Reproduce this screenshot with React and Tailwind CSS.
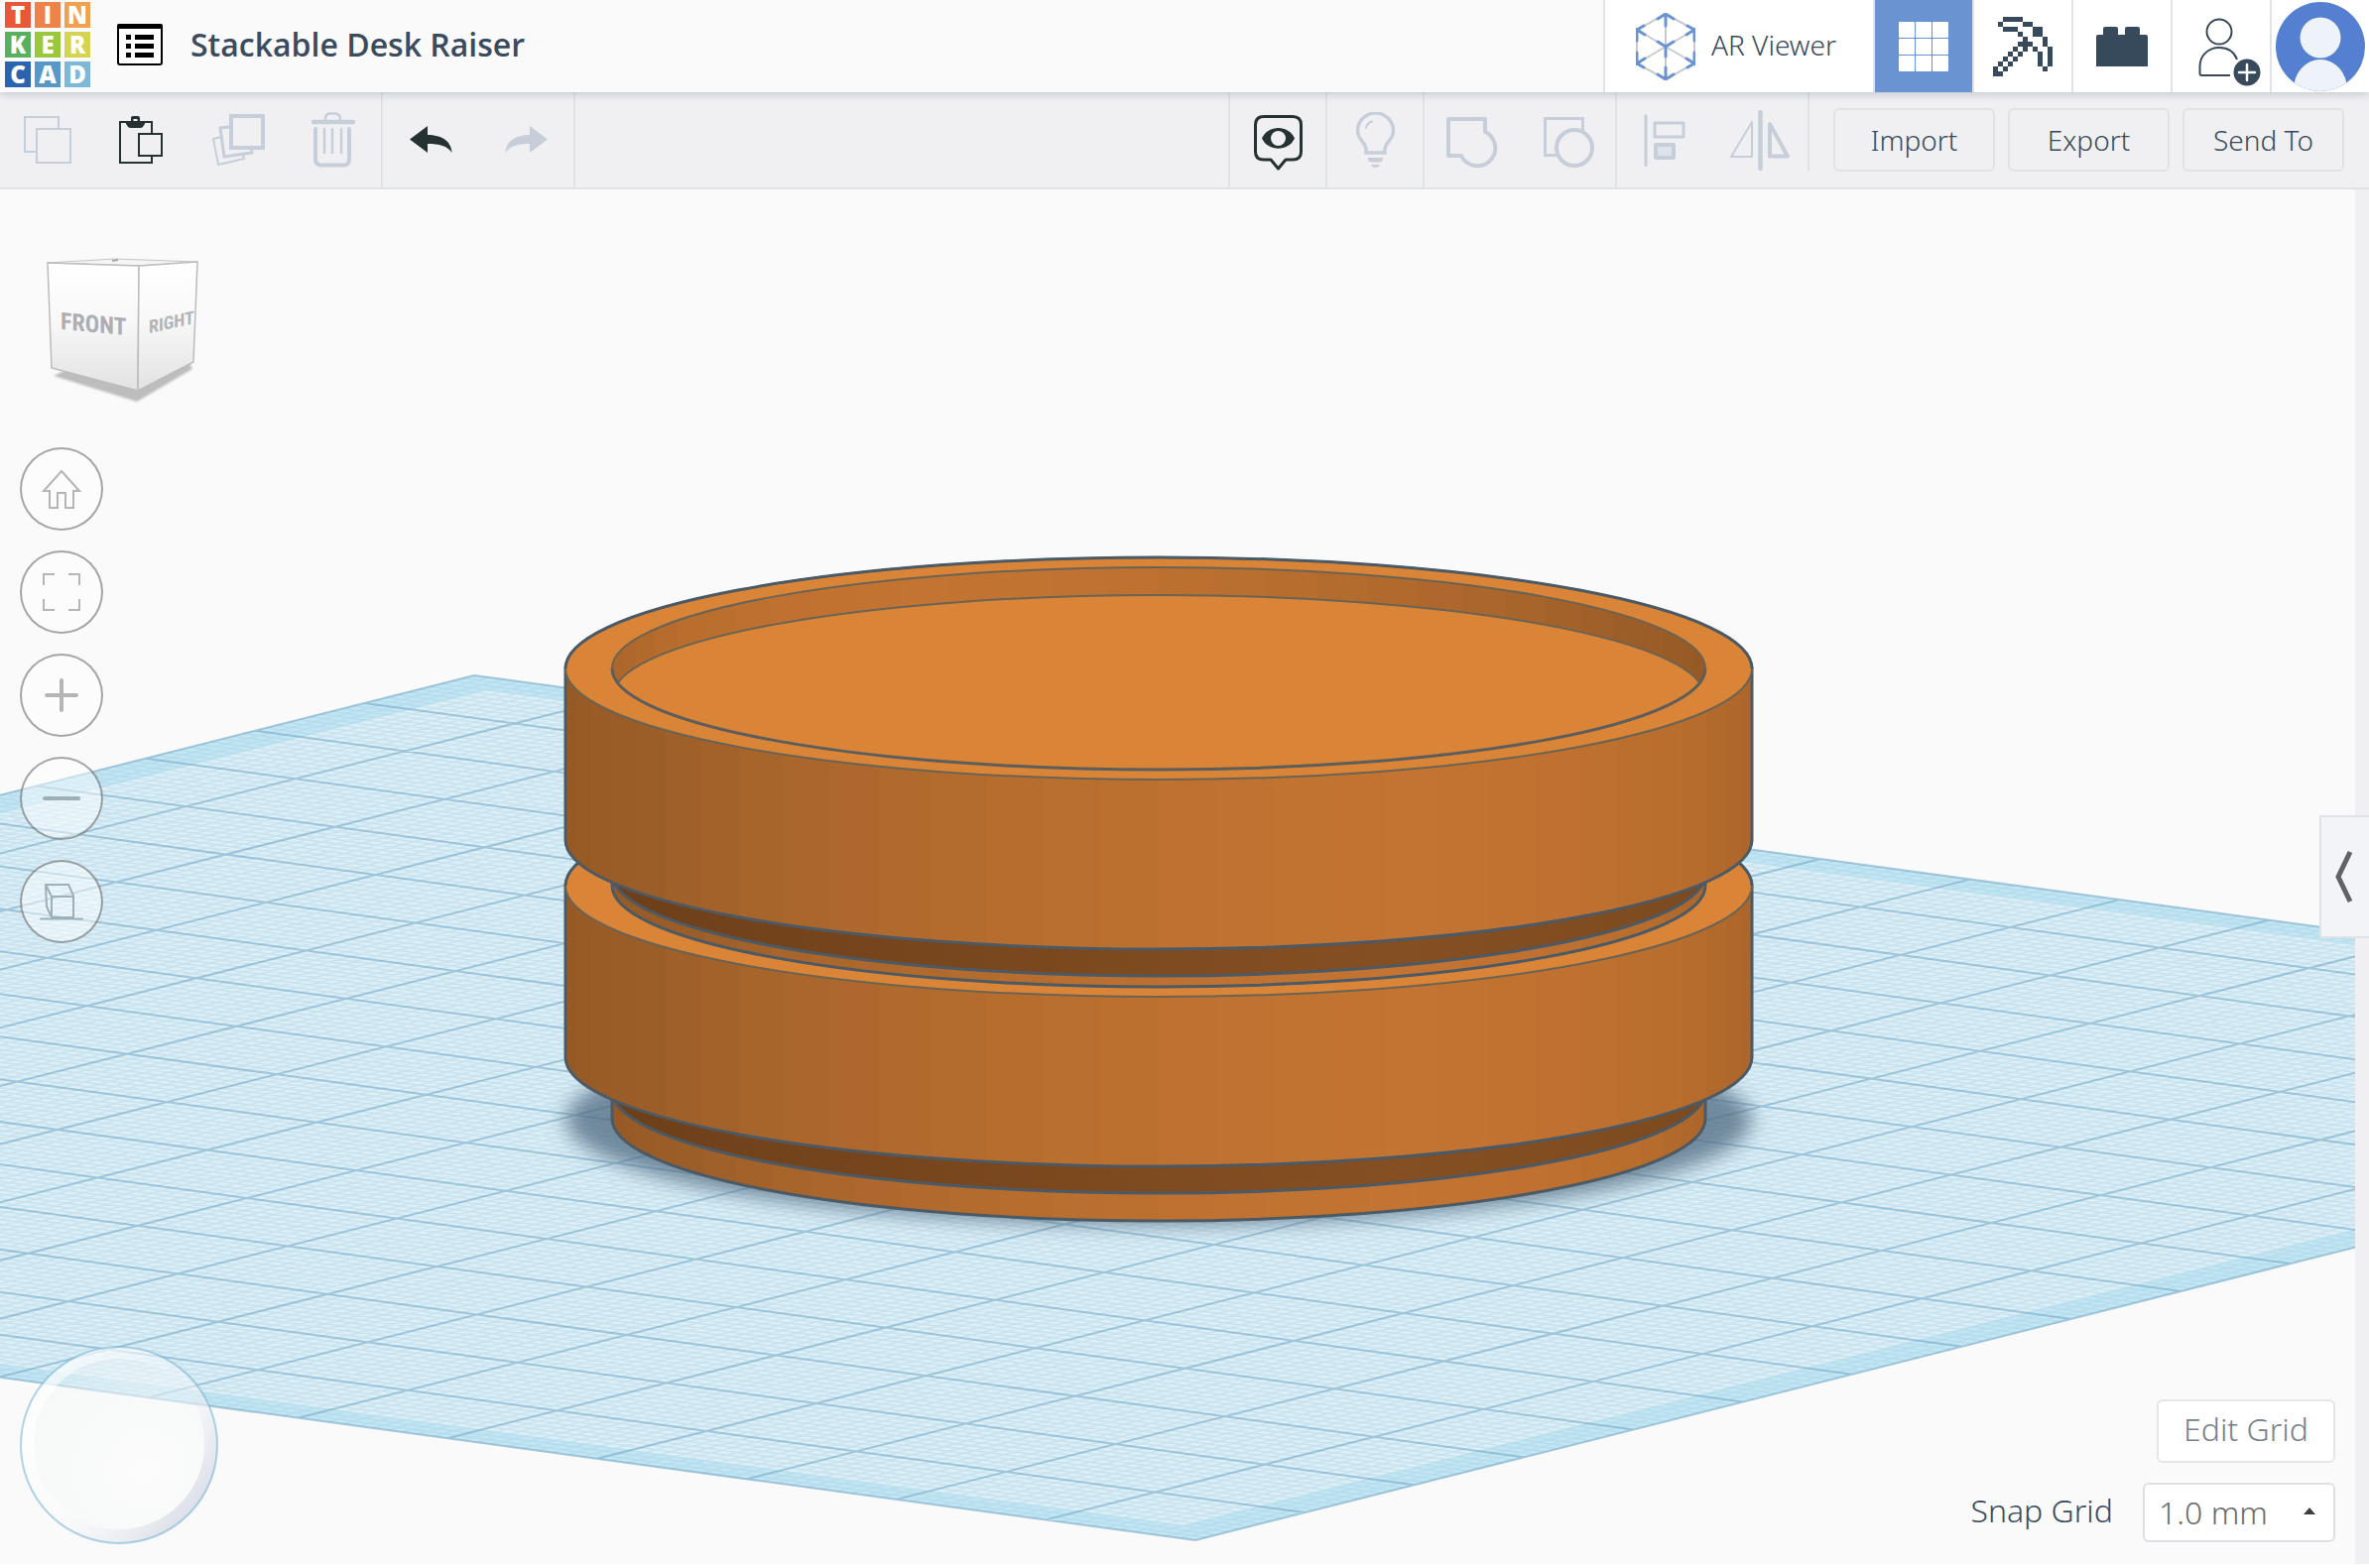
import { useState } from 'react';

const LOGO_TILES = [
    { letter: 'T', color: 'bg-[#e8573a]' },
    { letter: 'I', color: 'bg-[#ee824b]' },
    { letter: 'N', color: 'bg-[#efa050]' },
    { letter: 'K', color: 'bg-[#56b05f]' },
    { letter: 'E', color: 'bg-[#9bc83a]' },
    { letter: 'R', color: 'bg-[#d5d352]' },
    { letter: 'C', color: 'bg-[#2a64b0]' },
    { letter: 'A', color: 'bg-[#5798c9]' },
    { letter: 'D', color: 'bg-[#7eb7d8]' },
];

// 12x12 pixel map of the pickaxe
const PICKAXE = [
    [2, 3, 4, 5],
    [1, 6, 7],
    [2, 3, 4, 8, 9],
    [5, 8, 9],
    [6, 10],
    [5, 6, 7, 10],
    [4, 6, 8, 11],
    [3, 5, 9, 11],
    [2, 4, 9, 11],
    [1, 3, 9, 11],
    [0, 2, 10],
    [0, 1],
];

/* ---------- header icons ---------- */

const ListIcon = () => (
    <svg width="46" height="42" viewBox="0 0 46 42">
        <rect x="1" y="1" width="44" height="40" rx="2" fill="#fff" stroke="#000" strokeWidth="2" />
        <path d="M0 5V2a2 2 0 0 1 2-2h42a2 2 0 0 1 2 2v3z" fill="#000" />
        <path d="M9 11h5v5H9zM9 20h5v5H9zM9 29h5v5H9zM18 11h19v5H18zM18 20h19v5H18zM18 29h19v5H18z" fill="#000" />
    </svg>
);

const ArIcon = () => (
    <svg width="60" height="68" viewBox="-1 -1 60 68" fill="none" strokeLinecap="round">
        <path
            d="M29 0L58 16V50L29 66L0 50V16ZM29 0V66M0 16L58 50M58 16L0 50"
            stroke="#c9cacd"
            strokeWidth="2"
        />
        <path
            d="M21 5L29 0L37 5M29 0V12M0 27V16L8 21M0 16L7 12M58 27V16L50 21M58 16L51 12M0 39V50L8 45M0 50L7 54M58 39V50L50 45M58 50L51 54M21 61L29 66L37 61M29 66V54M21 28L29 33L37 28M29 33V43"
            stroke="#6a93d2"
            strokeWidth="3"
        />
    </svg>
);

const GridIcon = () => (
    <svg width="50" height="50" viewBox="0 0 50 50" fill="#fff">
        {[0, 17, 34].map(y => [0, 17, 34].map(x => (
            <rect key={`${x}-${y}`} x={x} y={y} width="16" height="16" rx="1" />
        )))}
    </svg>
);

const PickaxeIcon = () => (
    <svg width="60" height="60" viewBox="0 0 12 12" fill="#374a5c" shapeRendering="crispEdges">
        {PICKAXE.map((cols, row) => cols.map(col => (
            <rect key={`${row}-${col}`} x={col} y={row} width="1" height="1" />
        )))}
    </svg>
);

const BrickIcon = () => (
    <svg width="52" height="40" viewBox="0 0 52 40" fill="#374a5c">
        <path d="M0 40V10a2 2 0 0 1 2-2H7V2a2 2 0 0 1 2-2H20a2 2 0 0 1 2 2V8H29V2a2 2 0 0 1 2-2H42a2 2 0 0 1 2 2V8H50a2 2 0 0 1 2 2V40z" />
    </svg>
);

const InviteIcon = () => (
    <svg width="82" height="82" viewBox="-18 -12 82 82" fill="none">
        <circle cx="21" cy="14" r="12.500" stroke="#374a5c" strokeWidth="2" />
        <path d="M32 58H3.500Q1.500 58 1.500 56V49C1.500 38 10 30 21 30C29 30 36 34 39 42" stroke="#374a5c" strokeWidth="2" />
        <circle cx="49" cy="55" r="13.500" fill="#374a5c" />
        <path d="M49 47V63M41 55H57" stroke="#fff" strokeWidth="2.500" strokeLinecap="round" />
    </svg>
);

const AvatarIcon = () => (
    <svg width="90" height="90" viewBox="0 0 90 90">
        <defs>
            <clipPath id="avatarClip"><circle cx="45" cy="45" r="45" /></clipPath>
        </defs>
        <g clipPath="url(#avatarClip)">
            <rect width="90" height="90" fill="#5580d2" />
            <circle cx="45" cy="36" r="20.5" fill="#eef2f9" />
            <ellipse cx="45" cy="88" rx="27" ry="30" fill="#eef2f9" />
        </g>
    </svg>
);

/* ---------- toolbar icons ---------- */

const CopyIcon = () => (
    <svg width="48" height="48" viewBox="0 0 48 48" fill="#f0f0f3" stroke="#c6cfd9" strokeWidth="2">
        <rect x="1" y="1" width="34" height="35" />
        <rect x="13" y="13" width="34" height="34" />
    </svg>
);

const PasteIcon = () => (
    <svg width="48" height="48" viewBox="0 0 48 48" fill="none" stroke="#263132">
        <rect x="1" y="6" width="32" height="41" strokeWidth="2" />
        <path d="M7 5H12V2Q12 0 14 0H19Q21 0 21 2V5H26V8Q25 9 24 11Q23 12 21 12H12Q10 12 9 11Q8 9 7 8zM14.500 3V7H18.500V3z" fill="#263132" fillRule="evenodd" stroke="none" />
        <rect x="20" y="18" width="23" height="22" fill="#f0f0f3" strokeWidth="2" />
    </svg>
);

const DuplicateIcon = () => (
    <svg width="53" height="52" viewBox="0 0 53 52" fill="#f0f0f3" stroke="#c6cfd9">
        <path d="M1 25L26 19L32 45L6 51Z" strokeWidth="2" />
        <path d="M8 14L36 11L40 39L12 43Z" strokeWidth="3" />
        <rect x="19" y="2" width="32" height="32" strokeWidth="4" />
    </svg>
);

const TrashIcon = () => (
    <svg width="44" height="56" viewBox="0 0 44 56" fill="none" stroke="#c6cfd9" strokeLinecap="round">
        <path d="M14 8V7Q14 2 18 1.500H24Q29 2 29 7V8" strokeWidth="2.500" />
        <path d="M2 10H42" strokeWidth="4.500" />
        <path d="M4 17V47Q4 53.500 10 53.500H33Q38 53.500 38 47V17" strokeWidth="4" />
        <path d="M13 17V41M21 17V41M30 17V41" strokeWidth="2.500" />
    </svg>
);

const UndoIcon = () => (
    <svg width="43" height="28" viewBox="0 0 43 28" fill="#263132">
        <path d="M0 13.500L18 0V9C32 9 42 15 42.500 27C38 20 30 18 18 18V27Z" />
    </svg>
);

const RedoIcon = () => (
    <svg width="43" height="28" viewBox="0 0 43 28" fill="#c6cfd9">
        <path d="M43 13.500L25 0V9C11 9 1 15 0.500 27C5 20 13 18 25 18V27Z" />
    </svg>
);

const ViewIcon = () => (
    <svg width="49" height="62" viewBox="0 -6 49 62" fill="none">
        <path d="M10 1.500H39Q47.500 1.500 47.500 10V37Q47.500 45 39 45H32L24.500 54L17 45H10Q1.500 45 1.500 37V10Q1.500 1.500 10 1.500Z" stroke="#263132" strokeWidth="3" strokeLinejoin="round" />
        <path d="M8 23.500C14 9.500 35 9.500 41 23.500C35 37 14 37 8 23.500Z" fill="#263132" />
        <circle cx="24.500" cy="23.500" r="7.500" fill="#f0f0f3" />
    </svg>
);

const BulbIcon = () => (
    <svg width="39" height="56" viewBox="0 0 39 56" fill="none" stroke="#c6cfd9">
        <path d="M10 41V37Q10 35 8 32C5 28 1.500 25 1.500 19A18 18 0 0 1 37.500 19C37.500 25 34 28 31 32Q29 35 29 37V41Z" strokeWidth="3.500" />
        <path d="M10 16Q11 11 16 9.500" strokeWidth="2" strokeLinecap="round" />
        <path d="M12 46H27V48Q26 50.500 23 50.500H16Q13 50.500 12 48ZM15 53H24Q23 56 19.500 56Q16 56 15 53Z" fill="#c6cfd9" stroke="none" />
    </svg>
);

const GroupIcon = () => (
    <svg width="52" height="58" viewBox="0 -6 52 58" fill="none" stroke="#c6cfd9" strokeWidth="4">
        <path d="M2 2H39V15A18 18 0 1 1 15 39H2Z" strokeLinejoin="round" />
    </svg>
);

const UngroupIcon = () => (
    <svg width="56" height="58" viewBox="-4 -6 56 58" fill="#f0f0f3" stroke="#c6cfd9">
        <rect x="1.500" y="1.500" width="38" height="37" strokeWidth="3" />
        <circle cx="31" cy="31" r="18" strokeWidth="4" />
    </svg>
);

const AlignIcon = () => (
    <svg width="42" height="53" viewBox="0 0 42 53" fill="none" stroke="#c6cfd9" strokeLinejoin="round">
        <path d="M2 1.500V51.500" strokeWidth="3" strokeLinecap="round" />
        <rect x="11" y="9" width="29" height="14" strokeWidth="3" />
        <rect x="12" y="31" width="18" height="13" fill="#dfe3e9" strokeWidth="4" />
    </svg>
);

const MirrorIcon = () => (
    <svg width="61" height="61" viewBox="0 0 61 61" fill="none" stroke="#c6cfd9" strokeLinejoin="round">
        <path d="M30.500 2V59" strokeWidth="4.500" strokeLinecap="round" />
        <path d="M22 12V47H1Z" strokeWidth="2" />
        <path d="M40 14V46.500H58Z" strokeWidth="4" />
    </svg>
);

/* ---------- view controls ---------- */

const HomeIcon = () => (
    <svg width="42" height="40" viewBox="0 0 42 40" fill="none" stroke="#b5b5b5" strokeWidth="2">
        <path d="M21 2L39 22H33V39H25V24H17V39H9V22H3Z" />
    </svg>
);

const FitIcon = () => (
    <svg width="38" height="38" viewBox="0 0 38 38" fill="none" stroke="#b5b5b5" strokeWidth="2">
        <path d="M1 12V1H12M26 1H37V12M37 26V37H26M12 37H1V26" />
    </svg>
);

const PlusIcon = () => (
    <svg width="34" height="34" viewBox="0 0 34 34" stroke="#b5b5b5" strokeWidth="4" strokeLinecap="round">
        <path d="M17 2V32M2 17H32" />
    </svg>
);

const MinusIcon = () => (
    <svg width="38" height="6" viewBox="0 0 38 6" stroke="#9db0b8" strokeWidth="4" strokeLinecap="round">
        <path d="M2 3H36" />
    </svg>
);

const PerspectiveIcon = () => (
    <svg width="44" height="38" viewBox="0 0 44 38" fill="none" stroke="#9db0b8" strokeWidth="2" strokeLinejoin="round">
        <path d="M6 2H29L34 13V35H12L7 24ZM6 2L12 14H34M12 14V35" />
        <path d="M1 36.500H43" strokeLinecap="round" />
    </svg>
);

const ViewCube = () => (
    <svg width="160" height="150" viewBox="0 0 160 150">
        <defs>
            <linearGradient id="cubeFront" x1="0" y1="0" x2="0" y2="1">
                <stop offset="0" stopColor="#fff" />
                <stop offset="0.45" stopColor="#f8f8f8" />
                <stop offset="1" stopColor="#e2e2e2" />
            </linearGradient>
            <filter id="cubeShadow"><feGaussianBlur stdDeviation="1" /></filter>
        </defs>
        <path d="M14 123L98 149L154 116L150 108L97 128L30 115Z" fill="#bdbdbd" filter="url(#cubeShadow)" />
        <path d="M8 9L76 5L159 8L100 12Z" fill="#f5f5f5" stroke="#c4c4c4" />
        <path d="M8 9L100 12L99 138L12 115Z" fill="url(#cubeFront)" stroke="#bcbcbc" strokeWidth="1.500" />
        <path d="M100 12L159 8L155 109L99 138Z" fill="url(#cubeFront)" stroke="#bcbcbc" strokeWidth="1.500" />
        <path d="M73 7L79 6" stroke="#a8a8a8" strokeWidth="2" />
        <text transform="translate(21 76) skewY(5)" fontSize="24" fontWeight="700" fill="#acaeb2" className="font-['Liberation_Sans_Narrow','Roboto_Condensed','Open_Sans_Condensed','Open_Sans',sans-serif]">
            FRONT
        </text>
        <text transform="translate(110 80) skewY(-12)" fontSize="18" fontWeight="700" fill="#b2b4b8" className="font-['Liberation_Sans_Narrow','Roboto_Condensed','Open_Sans_Condensed','Open_Sans',sans-serif]">
            RIGHT
        </text>
    </svg>
);

const Joystick = () => (
    <svg width="200" height="200" viewBox="0 0 200 200">
        <defs>
            <linearGradient id="joyRing" x1="0.1" y1="0.2" x2="0.85" y2="0.85">
                <stop offset="0" stopColor="#fff" stopOpacity="0.75" />
                <stop offset="0.5" stopColor="#fcfcfd" stopOpacity="0.4" />
                <stop offset="1" stopColor="#dcdfe9" stopOpacity="0.95" />
            </linearGradient>
            <radialGradient id="joyPad" cx="0.65" cy="0.65" r="0.75">
                <stop offset="0" stopColor="#fdfdfd" stopOpacity="0.7" />
                <stop offset="1" stopColor="#f3f6f7" stopOpacity="0.4" />
            </radialGradient>
        </defs>
        <path d="M100 1a99 99 0 1 0 0.010 0zM100 13a86 86 0 1 1 -0.010 0z" fill="url(#joyRing)" fillRule="evenodd" />
        <circle cx="100" cy="99" r="86" fill="url(#joyPad)" />
        <circle cx="100" cy="100" r="99" fill="none" stroke="#6fb0d2" strokeOpacity="0.55" strokeWidth="2" />
    </svg>
);

/* ---------- 3D scene ---------- */

const LINE = '#4c5a66';
const EDGE = '#6b6353';
const CX = 1168;
const RX = 598;
const RX_IN = 551;

// wall colours from the left edge of a cylinder to the right one
const WALL = [
    [0, 150, 90, 38],
    [0.08, 157, 95, 40],
    [0.2, 171, 102, 44],
    [0.36, 182, 109, 46],
    [0.52, 190, 113, 48],
    [0.7, 195, 116, 50],
    [0.82, 193, 114, 49],
    [0.94, 184, 110, 46],
    [1, 172, 101, 43],
];

const wallColor = (p) => {
    const i = Math.max(1, WALL.findIndex(s => s[0] >= p));
    const [p0, ...a] = WALL[i - 1];
    const [p1, ...b] = WALL[i];
    const t = (p - p0) / (p1 - p0);
    return `rgb(${a.map((v, k) => Math.round(v + (b[k] - v) * t)).join(',')})`;
};

const FACETS = Array.from({ length: 32 }, (_, i) => {
    const edge = (k) => (1 - Math.cos((k * Math.PI) / 32)) / 2;
    return { from: edge(i), to: edge(i + 1), color: wallColor((edge(i) + edge(i + 1)) / 2) };
});

const WallGradient = ({ id, rx, flip }) => (
    <linearGradient id={id} gradientUnits="userSpaceOnUse" x1={flip ? CX + rx : CX - rx} x2={flip ? CX - rx : CX + rx} y1="0" y2="0">
        {FACETS.map(f => [
            <stop key={`a${f.from}`} offset={f.from} stopColor={f.color} />,
            <stop key={`b${f.from}`} offset={f.to} stopColor={f.color} />,
        ])}
    </linearGradient>
);

// A is the back corner of the plane; U and V run along its two edges
const A = [478, 681];
const U = [2714, 370];
const V = [-1987, 502];
const CELLS = 18;

const at = (u, v) => `${(A[0] + U[0] * u + V[0] * v).toFixed(1)} ${(A[1] + U[1] * u + V[1] * v).toFixed(1)}`;
const quad = (m) => `M${at(m, m)}L${at(1 - m, m)}L${at(1 - m, 1 - m)}L${at(m, 1 - m)}Z`;
const gridPath = (n, skip) => {
    let d = '';
    for (let i = 0; i <= n; i++) {
        if (skip && i % skip === 0) continue;
        d += `M${at(i / n, 0)}L${at(i / n, 1)}M${at(0, i / n)}L${at(1, i / n)}`;
    }
    return d;
};

const Workplane = () => (
    <g fill="none">
        <path d={quad(0)} fill="#c2e6f3" />
        <path d={quad(0.017)} fill="#dceff7" />
        <path d={gridPath(CELLS * 10, 10)} stroke="#a0cce0" strokeOpacity="0.34" strokeWidth="1.5" />
        <path d={gridPath(CELLS)} stroke="#74a9c7" strokeOpacity="0.6" strokeWidth="2" />
    </g>
);

const Wall = ({ rx, top, bottom, ry, fill }) => (
    <path
        d={`M${CX - rx} ${top}V${bottom}A${rx} ${ry} 0 0 0 ${CX + rx} ${bottom}V${top}Z`}
        fill={fill}
        stroke={LINE}
        strokeWidth="3"
    />
);

// shaded step between the wide body and the neck under it
const Step = ({ y }) => (
    <path
        d={`M${CX - RX + 14} ${y - 9}L${CX - RX_IN} ${y + 14}A${RX_IN} 103 0 0 0 ${CX + RX_IN} ${y + 14}L${CX + RX - 14} ${y - 9}Z`}
        fill="url(#step)"
        stroke={LINE}
        strokeWidth="3"
    />
);

const Body = ({ dy }) => (
    <g transform={`translate(0 ${dy})`}>
        <Step y={867} />
        <Wall rx={RX} top={674} bottom={847} ry={110} fill="url(#wall)" />
        <ellipse cx={CX} cy="674" rx={RX} ry="112" fill="#d98437" stroke={EDGE} strokeWidth="2" />
        <path d={`M${CX - RX} 674A${RX} 112 0 0 1 ${CX + RX} 674`} fill="none" stroke={LINE} strokeWidth="3" />
        <ellipse cx={CX} cy="674" rx={RX_IN} ry="102" fill="url(#innerWall)" stroke={EDGE} strokeWidth="2" />
    </g>
);

const Scene = () => (
    <svg className="col-start-1 row-start-1 h-full w-full" viewBox="0 191 2374 1386" preserveAspectRatio="xMidYMid slice" role="img" aria-label="Workplane">
        <defs>
            <WallGradient id="wall" rx={RX} />
            <WallGradient id="neckWall" rx={RX_IN} />
            <WallGradient id="innerWall" rx={RX_IN} flip />
            <linearGradient id="step" x1="0" x2="1" y1="0" y2="0">
                <stop offset="0" stopColor="#6c3f1a" />
                <stop offset="0.3" stopColor="#78461d" />
                <stop offset="0.7" stopColor="#854f22" />
                <stop offset="1" stopColor="#7c4a1f" />
            </linearGradient>
            <filter id="shadow" x="-10%" y="-30%" width="120%" height="160%">
                <feGaussianBlur stdDeviation="10" />
            </filter>
            <clipPath id="bowl"><ellipse cx={CX} cy="674" rx={RX_IN} ry="102" /></clipPath>
        </defs>
        <rect y="191" width="2374" height="1386" fill="#fafafa" />
        <Workplane />
        <ellipse cx={CX} cy="1129" rx="598" ry="106" fill="#4f6880" fillOpacity="0.75" filter="url(#shadow)" />
        <Wall rx={RX_IN} top={1100} bottom={1128} ry={103} fill="url(#neckWall)" />
        <Body dy={219} />
        {/* the lower rim keeps only the near side of its inner wall visible */}
        <ellipse cx={CX} cy="893" rx={RX_IN} ry="102" fill="url(#neckWall)" stroke={LINE} strokeWidth="3" />
        <Body dy={0} />
        <g clipPath="url(#bowl)">
            <ellipse cx={CX} cy="702" rx="550" ry="102" fill="#d98437" stroke={EDGE} strokeWidth="2" />
        </g>
        <path d={`M${CX - RX_IN} 674A${RX_IN} 102 0 0 0 ${CX + RX_IN} 674`} fill="none" stroke="#5d5e5c" strokeWidth="3" />
    </svg>
);

/* ---------- page ---------- */

const HeaderButton = ({ label, active, children }) => (
    <button
        type="button"
        aria-label={label}
        className={`flex w-[100px] items-center justify-center border-l-2 border-[#dfe2e7] ${active ? 'bg-[#6a93d2]' : 'bg-white'}`}
    >
        {children}
    </button>
);

const ToolButton = ({ label, disabled, children }) => (
    <button type="button" aria-label={label} disabled={disabled} className="flex w-24 items-center justify-center">
        {children}
    </button>
);

const ActionButton = ({ children }) => (
    <button type="button" className="h-16 w-[163px] rounded-md border-2 border-[#dfe2e7] text-[28px] font-light text-[#374a5c]">
        {children}
    </button>
);

const RoundButton = ({ label, children }) => (
    <button
        type="button"
        aria-label={label}
        className="flex size-[84px] items-center justify-center rounded-full border-2 border-black/35 bg-white/45"
    >
        {children}
    </button>
);

const Header = () => (
    <header className="relative z-10 flex h-[93px] justify-between bg-[#fafafa] shadow-[0_2px_8px_rgba(55,74,92,0.25)]">
        <div className="flex items-center pb-1">
            <a href="#" aria-label="Tinkercad" className="ml-[5px] grid grid-cols-3 gap-1 font-['Open_Sans',sans-serif] text-[24px] leading-[26px] font-extrabold text-white">
                {LOGO_TILES.map(tile => (
                    <span key={tile.letter} className={`size-[26px] text-center ${tile.color}`}>{tile.letter}</span>
                ))}
            </a>
            <button type="button" aria-label="Designs" className="ml-[27px]">
                <ListIcon />
            </button>
            <h1 className="ml-7 font-['Open_Sans',sans-serif] text-[32px] font-semibold text-[#3b4b5e]">Stackable Desk Raiser</h1>
        </div>
        <nav className="flex">
            <a href="#" className="flex w-[272px] items-center gap-4 border-l-2 border-[#dfe2e7] bg-white pl-[31px] text-[28px] font-light text-[#374a5c]">
                <ArIcon />
                <span className="pb-1">AR Viewer</span>
            </a>
            <HeaderButton label="3D design" active><GridIcon /></HeaderButton>
            <HeaderButton label="Blocks"><PickaxeIcon /></HeaderButton>
            <HeaderButton label="Bricks"><BrickIcon /></HeaderButton>
            <HeaderButton label="Invite people"><InviteIcon /></HeaderButton>
            <HeaderButton label="Account"><AvatarIcon /></HeaderButton>
        </nav>
    </header>
);

const Toolbar = () => (
    <div className="flex h-[98px] justify-between border-b-2 border-[#dfe2e7] bg-[#f0f0f3]">
        <div className="flex">
            <div className="flex border-r-2 border-[#dfe2e7]">
                <ToolButton label="Copy" disabled><CopyIcon /></ToolButton>
                <ToolButton label="Paste"><PasteIcon /></ToolButton>
                <ToolButton label="Duplicate" disabled><DuplicateIcon /></ToolButton>
                <ToolButton label="Delete" disabled><TrashIcon /></ToolButton>
            </div>
            <div className="flex border-r-2 border-[#dfe2e7]">
                <ToolButton label="Undo"><UndoIcon /></ToolButton>
                <ToolButton label="Redo" disabled><RedoIcon /></ToolButton>
            </div>
        </div>
        <div className="flex">
            <div className="flex border-l-2 border-[#dfe2e7]">
                <ToolButton label="View options"><ViewIcon /></ToolButton>
            </div>
            <div className="flex border-l-2 border-[#dfe2e7]">
                <ToolButton label="Show all" disabled><BulbIcon /></ToolButton>
            </div>
            <div className="flex border-l-2 border-[#dfe2e7]">
                <ToolButton label="Group" disabled><GroupIcon /></ToolButton>
                <ToolButton label="Ungroup" disabled><UngroupIcon /></ToolButton>
            </div>
            <div className="flex border-l-2 border-[#dfe2e7]">
                <ToolButton label="Align" disabled><AlignIcon /></ToolButton>
                <ToolButton label="Mirror" disabled><MirrorIcon /></ToolButton>
            </div>
            <div className="mr-6 h-20 w-[2px] bg-[#dfe2e7]" />
            <div className="mr-[25px] flex items-center gap-[13px]">
                <ActionButton>Import</ActionButton>
                <ActionButton>Export</ActionButton>
                <ActionButton>Send To</ActionButton>
            </div>
        </div>
    </div>
);

export default function App() {
    const [snap, setSnap] = useState('1.0 mm');

    return (
        <div className="flex min-h-screen flex-col bg-white pb-1 font-['Noto_Sans','Open_Sans',sans-serif]">
            <Header />
            <Toolbar />

            <main className="relative grid flex-1 grid-cols-1 bg-[#f0f0f3] pr-[14px]">
                <Scene />

                <div className="z-10 col-start-1 row-start-1 flex justify-between">
                    <div className="flex flex-col items-start justify-between pt-[65px] pb-5 pl-5">
                        <div className="flex flex-col gap-5">
                            <div className="mb-[25px] ml-5">
                                <ViewCube />
                            </div>
                            <RoundButton label="Home view"><HomeIcon /></RoundButton>
                            <RoundButton label="Fit all"><FitIcon /></RoundButton>
                            <RoundButton label="Zoom in"><PlusIcon /></RoundButton>
                            <RoundButton label="Zoom out"><MinusIcon /></RoundButton>
                            <RoundButton label="Switch projection"><PerspectiveIcon /></RoundButton>
                        </div>
                        <Joystick />
                    </div>

                    <div className="flex flex-col items-end justify-end gap-5 pr-5 pb-[22px] text-[32px] font-light">
                        <button type="button" className="h-16 w-[180px] rounded-md border-2 border-[#e4e6ec] bg-white pb-1 text-[#78828e]">
                            Edit Grid
                        </button>
                        <div className="flex items-center gap-[30px]">
                            <label htmlFor="snap" className="pb-1 text-[#3b4b5e]">Snap Grid</label>
                            <div className="relative">
                                <select
                                    id="snap"
                                    value={snap}
                                    onChange={(e) => setSnap(e.target.value)}
                                    className="h-[60px] w-[194px] appearance-none rounded-md border-2 border-[#dcdfe4] bg-white pl-[14px] text-[#6b6d6c]"
                                >
                                    <option>0.5 mm</option>
                                    <option>1.0 mm</option>
                                    <option>2.0 mm</option>
                                </select>
                                <svg className="pointer-events-none absolute top-[25px] right-5" width="12" height="7" viewBox="0 0 12 7">
                                    <path d="M6 0L12 7H0Z" fill="#3f3f3f" />
                                </svg>
                            </div>
                        </div>
                    </div>
                </div>

                <button
                    type="button"
                    aria-label="Show shapes"
                    className="absolute top-[631px] right-0 z-20 flex h-[124px] w-[50px] items-center justify-center border-2 border-r-0 border-[#dfe2e7] bg-[#f3f4f7]"
                >
                    <svg width="20" height="54" viewBox="0 0 20 54" fill="none">
                        <path d="M15 2L3 27L15 52" stroke="#606366" strokeWidth="5" />
                    </svg>
                </button>
            </main>
        </div>
    );
}
